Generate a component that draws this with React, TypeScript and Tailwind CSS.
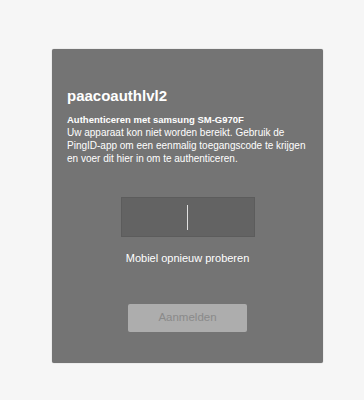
export default function App() {
  return (
    <div className="min-h-[400px] w-full bg-[#f6f6f6] pt-[49px] font-['Liberation_Sans',Arial,sans-serif]">
      <div className="ml-[52px] flex h-[314px] w-[271px] flex-col rounded-[2px] bg-[#747474] px-[15px] pt-[37px] shadow-[0_0_1px_rgba(0,0,0,0.4)]">
        <h1 className="text-[15px] font-bold leading-[20px] text-white">paacoauthlvl2</h1>
        <p className="mt-[7px] text-[9.5px] font-bold leading-[13px] text-white">
          Authenticeren met samsung SM-G970F
        </p>
        <p className="text-[10px] leading-[13px] text-white">
          Uw apparaat kon niet worden bereikt. Gebruik de PingID-app om een eenmalig toegangscode te krijgen en voer dit hier in om te authenticeren.
        </p>
        <div className="mt-[32px] flex justify-center">
          <div className="flex h-[40px] w-[134px] items-center justify-center border border-[#5c5c5c] bg-[#636363]">
            <div className="h-[25px] w-[1px] bg-[#e0e0e0]" />
          </div>
        </div>
        <p className="mt-[14px] text-center text-[11px] leading-[14px] text-white">Mobiel opnieuw proberen</p>
        <div className="mt-[39px] flex justify-center">
          <button className="h-[28px] w-[119px] rounded-[2px] bg-[#adadad] text-[11.5px] text-[#8a8a8a]">Aanmelden</button>
        </div>
      </div>
    </div>
  );
}
